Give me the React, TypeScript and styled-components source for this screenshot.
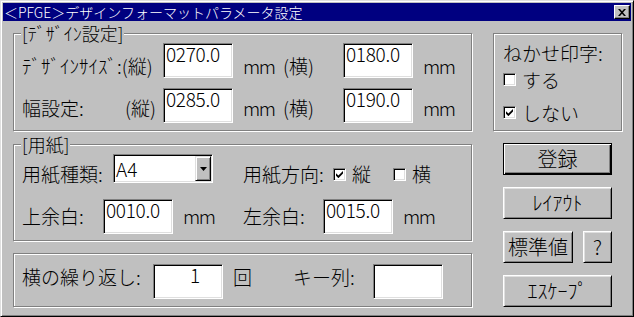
import styled, { createGlobalStyle } from "styled-components";

const FONT = `"Noto Sans CJK JP", "Noto Sans", sans-serif`;

const GlobalStyle = createGlobalStyle`
  html, body {
    margin: 0;
    padding: 0;
    background: #c0c0c0;
  }
`;

const Window = styled.div`
  box-sizing: border-box;
  width: 634px;
  height: 317px;
  padding: 2px;
  background: #c0c0c0;
  border: 1px solid;
  border-color: #dfdfdf #000 #000 #dfdfdf;
  box-shadow: inset 1px 1px 0 #fff, inset -1px -1px 0 #808080;
  color: #000;
  font-family: ${FONT};
  font-weight: 300;
`;

const TitleBar = styled.div`
  display: flex;
  align-items: center;
  justify-content: space-between;
  height: 18px;
  padding: 0 1px;
  background: #000080;
  color: #fff;
`;

const TitleText = styled.span`
  font-size: 14px;
  line-height: 18px;
  white-space: nowrap;
`;

const CloseButton = styled.button`
  box-sizing: border-box;
  display: flex;
  align-items: center;
  justify-content: center;
  width: 16px;
  height: 14px;
  padding: 0;
  background: #c0c0c0;
  border: 1px solid;
  border-color: #fff #000 #000 #fff;
  box-shadow: inset -1px -1px 0 #808080;
`;

const Body = styled.div`
  display: flex;
  gap: 21px;
  padding: 12px 0 0 10px;
`;

const Column = styled.div<{ $w: number; $gap?: number }>`
  display: flex;
  flex-direction: column;
  gap: ${(p) => p.$gap ?? 0}px;
  width: ${(p) => p.$w}px;
`;

const Group = styled.div<{ $h: number; $mt?: number; $pad: string }>`
  position: relative;
  box-sizing: border-box;
  height: ${(p) => p.$h}px;
  margin-top: ${(p) => p.$mt ?? 0}px;
  padding: ${(p) => p.$pad};
  border: 1px solid #808080;
  box-shadow: 1px 1px 0 #fff, inset 1px 1px 0 #fff;
`;

const Legend = styled.span`
  position: absolute;
  top: -11px;
  left: 7px;
  padding: 0 1px;
  background: #c0c0c0;
  font-size: 18px;
  line-height: 20px;
  white-space: nowrap;
`;

const Label = styled.span<{ $w?: number; $pl?: number }>`
  box-sizing: border-box;
  flex: none;
  width: ${(p) => (p.$w ? `${p.$w}px` : "auto")};
  padding-left: ${(p) => p.$pl ?? 0}px;
  font-size: 19px;
  line-height: 20px;
  white-space: nowrap;
`;

// the "mm" unit is set narrow in the original dialog
const Unit = styled(Label)`
  letter-spacing: -1.5px;
`;

const LabelPair = styled(Label)`
  display: flex;
  justify-content: space-between;
  padding-right: 7px;
`;

const SideTitle = styled(Label)`
  display: block;
  line-height: 21px;
`;

const CheckItem = styled.span<{ $w?: number }>`
  display: inline-flex;
  align-items: center;
  gap: 6px;
  flex: none;
  width: ${(p) => (p.$w ? `${p.$w}px` : "auto")};
  height: 20px;
`;

const Row = styled.div<{ $textTop: number; $mt?: number }>`
  display: flex;
  align-items: flex-start;
  margin-top: ${(p) => p.$mt ?? 0}px;

  & > ${Label}, & > ${CheckItem} {
    margin-top: ${(p) => p.$textTop}px;
  }
`;

const Field = styled.input<{ $w?: number; $center?: boolean }>`
  box-sizing: border-box;
  flex: none;
  width: ${(p) => p.$w ?? 70}px;
  height: 35px;
  margin: 0;
  padding: 0 2px 14px ${(p) => (p.$center ? 16 : 2)}px;
  border: 1px solid;
  border-color: #808080 #fff #fff #808080;
  box-shadow: inset 1px 1px 0 #000, inset -1px -1px 0 #dfdfdf;
  background: #fff;
  color: #000;
  font-family: ${FONT};
  font-weight: 300;
  font-size: 19px;
  line-height: 20px;
  letter-spacing: -0.3px;
  text-align: ${(p) => (p.$center ? "center" : "left")};
  outline: none;
`;

const Select = styled.div<{ $w: number }>`
  box-sizing: border-box;
  display: flex;
  align-items: center;
  flex: none;
  width: ${(p) => p.$w}px;
  height: 29px;
  border: 1px solid;
  border-color: #808080 #fff #fff #808080;
  box-shadow: inset 1px 1px 0 #000, inset -1px -1px 0 #dfdfdf;
  background: #fff;
  padding: 1px;
`;

const SelectValue = styled.span`
  flex: 1;
  padding-left: 1px;
  font-size: 19px;
  line-height: 20px;
`;

const DropButton = styled.span`
  box-sizing: border-box;
  display: flex;
  align-items: center;
  justify-content: center;
  width: 16px;
  height: 100%;
  background: #c0c0c0;
  border: 1px solid;
  border-color: #dfdfdf #000 #000 #dfdfdf;
  box-shadow: inset 1px 1px 0 #fff, inset -1px -1px 0 #808080;
`;

const CheckBox = styled.span`
  box-sizing: border-box;
  display: inline-flex;
  align-items: center;
  justify-content: center;
  flex: none;
  width: 13px;
  height: 13px;
  background: #fff;
  border: 1px solid;
  border-color: #808080 #fff #fff #808080;
  box-shadow: inset 1px 1px 0 #000, inset -1px -1px 0 #dfdfdf;
`;

const OptionRow = styled.div`
  display: flex;
  align-items: center;
  height: 33px;
`;

const ButtonStack = styled.div`
  display: flex;
  flex-direction: column;
  gap: 12px;
  padding-left: 10px;
`;

const ButtonRow = styled.div`
  display: flex;
  gap: 10px;
`;

const Button = styled.button<{ $w?: number; $default?: boolean }>`
  box-sizing: border-box;
  width: ${(p) => p.$w ?? 109}px;
  height: 32px;
  padding: 0;
  background: #c0c0c0;
  color: #000;
  font-family: ${FONT};
  font-weight: 300;
  font-size: 20px;
  line-height: 20px;
  border: 1px solid;
  border-color: ${(p) => (p.$default ? "#000" : "#fff #000 #000 #fff")};
  box-shadow: ${(p) =>
    p.$default
      ? "inset 1px 1px 0 #fff, inset -1px -1px 0 #000, inset -2px -2px 0 #808080"
      : "inset 1px 1px 0 #dfdfdf, inset -1px -1px 0 #808080"};
`;

const Check = ({ on }: { on?: boolean }) => (
  <CheckBox>
    {on && (
      <svg width="7" height="7" viewBox="0 0 7 7">
        <polygon points="0,2.2 2.4,4.6 7,0 7,2.6 2.4,7.2 0,4.8" fill="#000" />
      </svg>
    )}
  </CheckBox>
);

const Option = ({ on, label, w }: { on?: boolean; label: string; w?: number }) => (
  <CheckItem $w={w}>
    <Check on={on} />
    <Label>{label}</Label>
  </CheckItem>
);

export default function App() {
  return (
    <>
      <GlobalStyle />
      <Window>
        <TitleBar>
          <TitleText>＜PFGE＞デザインフォーマットパラメータ設定</TitleText>
          <CloseButton aria-label="閉じる">
            <svg width="8" height="7" viewBox="0 0 8 7">
              <path d="M0 0h2l2 2.3L6 0h2L5 3.5 8 7H6L4 4.7 2 7H0l3-3.5z" fill="#000" />
            </svg>
          </CloseButton>
        </TitleBar>

        <Body>
          <Column $w={459}>
            <Group $h={98} $pad="9px 8px 0">
              <Legend>[ﾃﾞｻﾞｲﾝ設定]</Legend>
              <Row $textTop={13}>
                <Label $w={141}>ﾃﾞｻﾞｲﾝｻｲｽﾞ:(縦)</Label>
                <Field defaultValue="0270.0" />
                <Unit $w={50} $pl={10}>mm</Unit>
                <Label $w={60}>(横)</Label>
                <Field defaultValue="0180.0" />
                <Unit $pl={10}>mm</Unit>
              </Row>
              <Row $textTop={10} $mt={10}>
                <LabelPair $w={141}>
                  <span>幅設定:</span>
                  <span>(縦)</span>
                </LabelPair>
                <Field defaultValue="0285.0" />
                <Unit $w={50} $pl={10}>mm</Unit>
                <Label $w={60}>(横)</Label>
                <Field defaultValue="0190.0" />
                <Unit $pl={10}>mm</Unit>
              </Row>
            </Group>

            <Group $h={97} $mt={13} $pad="9px 8px 0">
              <Legend>[用紙]</Legend>
              <Row $textTop={10}>
                <Label $w={91}>用紙種類:</Label>
                <Select $w={100}>
                  <SelectValue>A4</SelectValue>
                  <DropButton>
                    <svg width="7" height="4" viewBox="0 0 7 4">
                      <polygon points="0,0 7,0 3.5,4" fill="#000" />
                    </svg>
                  </DropButton>
                </Select>
                <Label $w={120} $pl={30}>用紙方向:</Label>
                <Option on label="縦" w={60} />
                <Option label="横" />
              </Row>
              <Row $textTop={7} $mt={15}>
                <Label $w={81}>上余白:</Label>
                <Field defaultValue="0010.0" />
                <Unit $w={70} $pl={10}>mm</Unit>
                <Label $w={80}>左余白:</Label>
                <Field defaultValue="0015.0" />
                <Unit $pl={10}>mm</Unit>
              </Row>
            </Group>

            <Group $h={54} $mt={12} $pad="10px 8px 0">
              <Row $textTop={3}>
                <Label $w={131}>横の繰り返し:</Label>
                <Field $center defaultValue="1" />
                <Label $w={70} $pl={10}>回</Label>
                <Label $w={80}>キー列:</Label>
                <Field defaultValue="" />
              </Row>
            </Group>
          </Column>

          <Column $w={129} $gap={12}>
            <Group $h={98} $pad="8px 0 0 9px">
              <SideTitle>ねかせ印字:</SideTitle>
              <OptionRow>
                <Option label="する" />
              </OptionRow>
              <OptionRow>
                <Option on label="しない" />
              </OptionRow>
            </Group>

            <ButtonStack>
              <Button $default>登録</Button>
              <Button>ﾚｲｱｳﾄ</Button>
              <ButtonRow>
                <Button $w={70}>標準値</Button>
                <Button $w={29}>?</Button>
              </ButtonRow>
              <Button>ｴｽｹｰﾌﾟ</Button>
            </ButtonStack>
          </Column>
        </Body>
      </Window>
    </>
  );
}
